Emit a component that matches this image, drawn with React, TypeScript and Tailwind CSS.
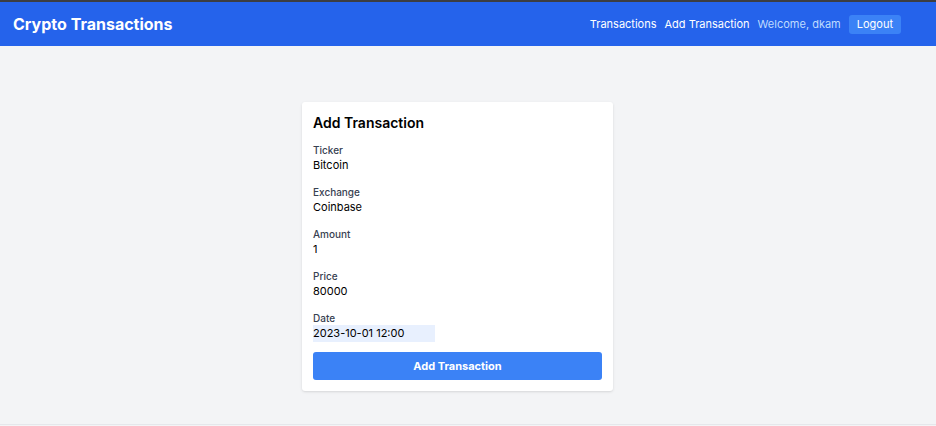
import { useState } from "react";

type Field = {
  id: string;
  label: string;
  value: string;
  highlighted?: boolean;
};

const initialFields: Field[] = [
  { id: "ticker", label: "Ticker", value: "Bitcoin" },
  { id: "exchange", label: "Exchange", value: "Coinbase" },
  { id: "amount", label: "Amount", value: "1" },
  { id: "price", label: "Price", value: "80000" },
  { id: "date", label: "Date", value: "2023-10-01 12:00", highlighted: true },
];

function NavBar() {
  return (
    <header className="flex h-11 items-center justify-between bg-[#2563eb] pr-[35px] pl-[13px] text-white">
      <a href="#home" className="text-[16px] leading-6 font-bold">
        Crypto Transactions
      </a>
      <nav className="flex items-center gap-2 text-[11px] leading-[17px]">
        <a href="#transactions">Transactions</a>
        <a href="#add">Add Transaction</a>
        <span className="text-[#bfdbfe]">Welcome, dkam</span>
        <button type="button" className="rounded-[3px] bg-[#3b82f6] px-2 py-px">
          Logout
        </button>
      </nav>
    </header>
  );
}

function TransactionForm() {
  const [fields, setFields] = useState(initialFields);

  return (
    <form
      onSubmit={(event) => event.preventDefault()}
      className="flex w-full max-w-[311px] flex-col gap-[10px] rounded-[3px] bg-white p-[11px] shadow-sm"
    >
      <h1 className="text-[14px] leading-5 font-semibold">Add Transaction</h1>
      <div className="flex flex-col gap-[11px]">
        {fields.map((field) => (
          <div key={field.id}>
            <label
              htmlFor={field.id}
              className="block text-[10px] leading-[14px] font-medium text-[#374151]"
            >
              {field.label}
            </label>
            <input
              id={field.id}
              type="text"
              value={field.value}
              onChange={(event) =>
                setFields(
                  fields.map((item) =>
                    item.id === field.id ? { ...item, value: event.target.value } : item,
                  ),
                )
              }
              className={`block h-[17px] w-[122px] text-[11px] leading-[17px] outline-none ${
                field.highlighted ? "bg-[#e8f0fe]" : "bg-white"
              }`}
            />
          </div>
        ))}
      </div>
      <button
        type="submit"
        className="h-7 w-full rounded-[3px] bg-[#3b82f6] text-[11px] leading-[17px] font-bold text-white"
      >
        Add Transaction
      </button>
    </form>
  );
}

export default function App() {
  return (
    <div className="flex min-h-screen flex-col border-t-2 border-[#3c3d41] bg-[#f3f4f6] font-['Inter','Liberation_Sans',sans-serif] text-black">
      <NavBar />
      <main className="flex flex-1 items-start justify-center pt-14 pr-[21px] pb-8">
        <TransactionForm />
      </main>
      <footer className="h-0.5 border-t border-[#e5e7eb]" />
    </div>
  );
}
